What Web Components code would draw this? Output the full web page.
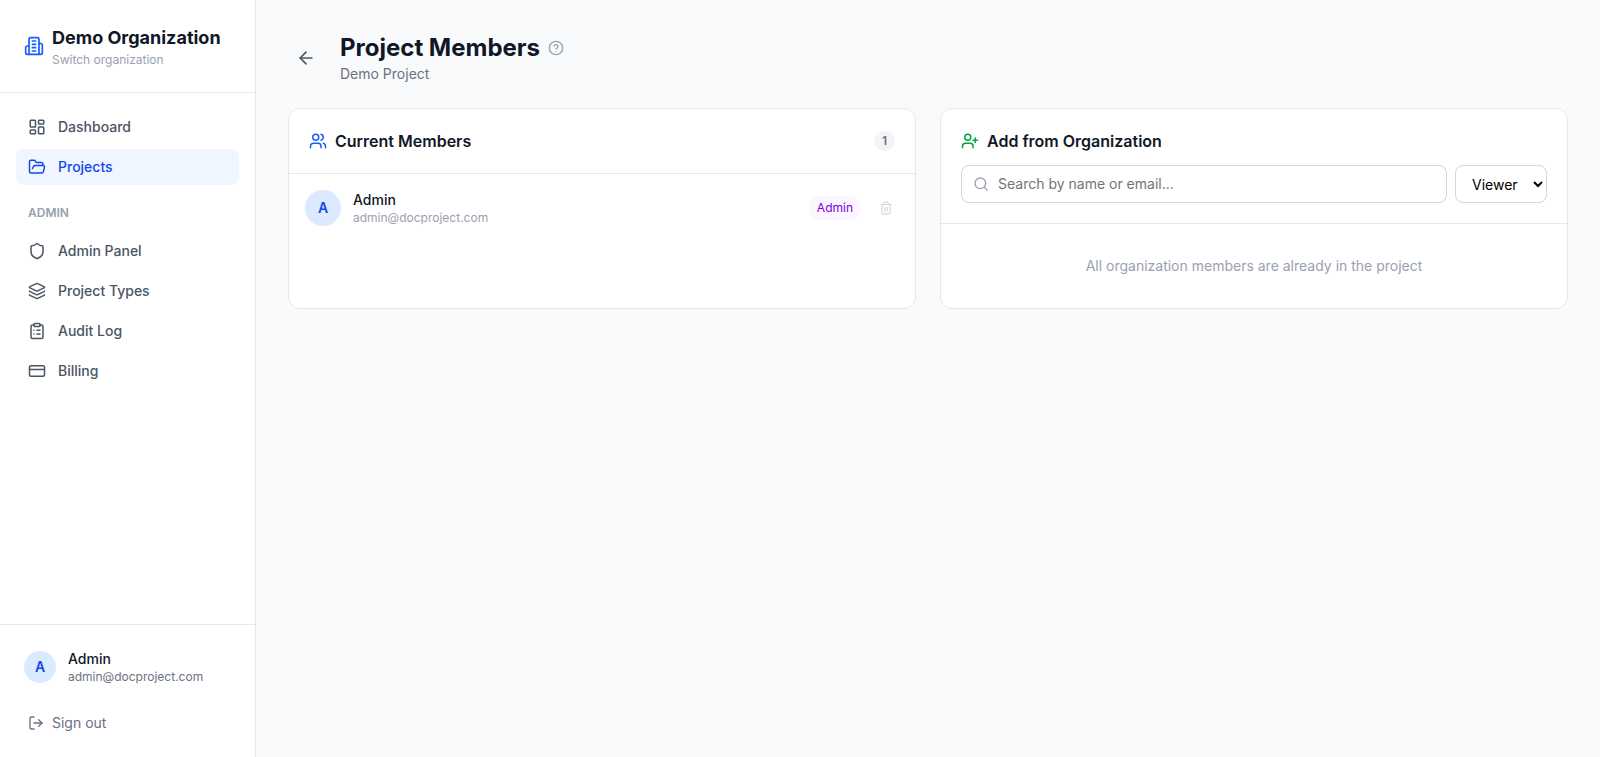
<!DOCTYPE html>
<html lang="en">
<head>
  <meta charset="UTF-8">
  <meta name="viewport" content="width=device-width, initial-scale=1">
  <title>Project Members</title>
  <style>
    :root {
      --gray-50: #f9fafb;
      --gray-100: #f3f4f6;
      --gray-200: #e5e7eb;
      --gray-300: #d1d5dc;
      --gray-400: #99a1af;
      --gray-500: #6a7282;
      --gray-600: #4a5565;
      --gray-900: #101828;
      --blue-50: #eff6ff;
      --blue-100: #dbeafe;
      --blue-600: #155dfc;
      --blue-700: #1447e6;
      --green-600: #00a63e;
      --purple-50: #faf5ff;
      --purple-700: #8200db;
    }
    body {
      margin: 0;
      background: var(--gray-50);
      color: var(--gray-900);
      font: 400 14px/20px Inter, "Liberation Sans", sans-serif;
    }
  </style>
</head>
<body>
  <members-page></members-page>

  <script>
    // Icon shapes on a 24x24 grid
    const ICONS = {
      building: '<path d="M6 22V4a2 2 0 0 1 2-2h8a2 2 0 0 1 2 2v18Z"/><path d="M6 12H4a2 2 0 0 0-2 2v6a2 2 0 0 0 2 2h2"/><path d="M18 9h2a2 2 0 0 1 2 2v9a2 2 0 0 1-2 2h-2"/><path d="M10 6h4M10 10h4M10 14h4M10 18h4"/>',
      dashboard: '<rect width="7" height="9" x="3" y="3" rx="1"/><rect width="7" height="5" x="14" y="3" rx="1"/><rect width="7" height="9" x="14" y="12" rx="1"/><rect width="7" height="5" x="3" y="16" rx="1"/>',
      folder: '<path d="m6 14 1.5-2.9A2 2 0 0 1 9.24 10H20a2 2 0 0 1 1.94 2.5l-1.54 6a2 2 0 0 1-1.95 1.5H4a2 2 0 0 1-2-2V5a2 2 0 0 1 2-2h3.9a2 2 0 0 1 1.69.9l.81 1.2a2 2 0 0 0 1.67.9H18a2 2 0 0 1 2 2v2"/>',
      shield: '<path d="M20 13c0 5-3.5 7.5-7.66 8.95a1 1 0 0 1-.67-.01C7.5 20.5 4 18 4 13V6a1 1 0 0 1 1-1c2 0 4.5-1.2 6.24-2.72a1.17 1.17 0 0 1 1.52 0C14.51 3.81 17 5 19 5a1 1 0 0 1 1 1z"/>',
      layers: '<path d="M12.83 2.18a2 2 0 0 0-1.66 0L2.6 6.08a1 1 0 0 0 0 1.83l8.58 3.91a2 2 0 0 0 1.66 0l8.58-3.9a1 1 0 0 0 0-1.83z"/><path d="M2 12a1 1 0 0 0 .58.91l8.6 3.91a2 2 0 0 0 1.65 0l8.58-3.9A1 1 0 0 0 22 12"/><path d="M2 17a1 1 0 0 0 .58.91l8.6 3.91a2 2 0 0 0 1.65 0l8.58-3.9A1 1 0 0 0 22 17"/>',
      clipboard: '<rect width="8" height="4" x="8" y="2" rx="1"/><path d="M16 4h2a2 2 0 0 1 2 2v14a2 2 0 0 1-2 2H6a2 2 0 0 1-2-2V6a2 2 0 0 1 2-2h2"/><path d="M12 11h4M12 16h4M8 11h.01M8 16h.01"/>',
      card: '<rect width="20" height="14" x="2" y="5" rx="2"/><path d="M2 10h20"/>',
      logout: '<path d="m16 17 5-5-5-5"/><path d="M21 12H9"/><path d="M9 21H5a2 2 0 0 1-2-2V5a2 2 0 0 1 2-2h4"/>',
      back: '<path d="m12 19-7-7 7-7"/><path d="M19 12H5"/>',
      help: '<circle cx="12" cy="12" r="10"/><path d="M9.09 9a3 3 0 0 1 5.83 1c0 2-3 3-3 3"/><path d="M12 17h.01"/>',
      users: '<path d="M16 21v-2a4 4 0 0 0-4-4H6a4 4 0 0 0-4 4v2"/><circle cx="9" cy="7" r="4"/><path d="M16 3.13a4 4 0 0 1 0 7.75"/><path d="M22 21v-2a4 4 0 0 0-3-3.87"/>',
      userPlus: '<path d="M16 21v-2a4 4 0 0 0-4-4H6a4 4 0 0 0-4 4v2"/><circle cx="9" cy="7" r="4"/><path d="M19 8v6M22 11h-6"/>',
      search: '<circle cx="11" cy="11" r="8"/><path d="m21 21-4.34-4.34"/>',
      trash: '<path d="M3 6h18"/><path d="M19 6v14a2 2 0 0 1-2 2H7a2 2 0 0 1-2-2V6"/><path d="M8 6V4a2 2 0 0 1 2-2h4a2 2 0 0 1 2 2v2"/><path d="M10 11v6M14 11v6"/>'
    };

    // Shared rules, repeated in every shadow root
    const RESET = `
      *, :host { box-sizing: border-box; }
      h1, h2, p { margin: 0; }
      a { color: inherit; text-decoration: none; }
      button, input, select { margin: 0; font: inherit; color: inherit; }
      button { padding: 0; border: 0; background: none; cursor: pointer; text-align: left; }
    `;

    class BaseElement extends HTMLElement {
      connectedCallback() {
        if (this.shadowRoot) return;
        this.attachShadow({ mode: 'open' });
        this.shadowRoot.innerHTML = `<style>${RESET}${this.styles()}</style>${this.render()}`;
      }
      styles() { return ''; }
      render() { return ''; }
    }

    class UiIcon extends BaseElement {
      styles() {
        return `
          :host { display: block; flex: none; }
          svg { display: block; }
        `;
      }
      render() {
        const size = this.getAttribute('size') || 18;
        return `<svg width="${size}" height="${size}" viewBox="0 0 24 24" fill="none" stroke="currentColor"
          stroke-width="2" stroke-linecap="round" stroke-linejoin="round" aria-hidden="true">${ICONS[this.getAttribute('name')]}</svg>`;
      }
    }

    class UserInfo extends BaseElement {
      styles() {
        return `
          :host { display: flex; align-items: center; gap: 12px; min-width: 0; --size: 32px; --email: var(--gray-500); }
          :host([large]) { --size: 36px; --email: var(--gray-400); }
          .avatar {
            display: flex; align-items: center; justify-content: center; flex: none;
            width: var(--size); height: var(--size); border-radius: 50%;
            background: var(--blue-100); color: var(--blue-700); font-weight: 600;
          }
          .name { font-weight: 500; }
          .email { color: var(--email); font-size: 12px; line-height: 16px; }
        `;
      }
      render() {
        const name = this.getAttribute('name');
        return `
          <div class="avatar">${name[0]}</div>
          <div>
            <p class="name">${name}</p>
            <p class="email">${this.getAttribute('email')}</p>
          </div>
        `;
      }
    }

    class NavItem extends BaseElement {
      styles() {
        return `
          :host { display: block; color: var(--gray-600); }
          :host([active]) { color: var(--blue-700); }
          a { display: flex; align-items: center; gap: 12px; padding: 8px 12px; border-radius: 8px; font-weight: 500; }
          a:hover { background: var(--gray-100); }
          :host([active]) a { background: var(--blue-50); }
        `;
      }
      render() {
        return `<a href="#"><ui-icon name="${this.getAttribute('icon')}"></ui-icon><slot></slot></a>`;
      }
    }

    class AppSidebar extends BaseElement {
      styles() {
        return `
          :host { display: flex; flex-direction: column; flex: none; width: 256px; background: #fff; border-right: 1px solid var(--gray-200); }
          .org { display: flex; align-items: center; gap: 8px; padding: 24px; border-bottom: 1px solid var(--gray-200); }
          .org ui-icon { color: var(--blue-600); }
          .org strong { display: block; font-size: 18px; line-height: 28px; font-weight: 700; white-space: nowrap; }
          .org span { display: block; font-size: 12px; line-height: 16px; color: var(--gray-400); }
          nav { flex: 1; display: flex; flex-direction: column; gap: 4px; padding: 16px; }
          .label { padding: 16px 12px 8px; font-size: 12px; line-height: 16px; font-weight: 600; color: var(--gray-400); text-transform: uppercase; }
          .account { padding: 16px; border-top: 1px solid var(--gray-200); }
          user-info { padding: 8px; margin-bottom: 12px; }
          .signout { display: flex; align-items: center; gap: 8px; width: 100%; padding: 8px 12px; color: var(--gray-500); }
        `;
      }
      render() {
        return `
          <button class="org" type="button">
            <ui-icon name="building" size="20"></ui-icon>
            <div><strong>Demo Organization</strong><span>Switch organization</span></div>
          </button>
          <nav>
            <nav-item icon="dashboard">Dashboard</nav-item>
            <nav-item icon="folder" active>Projects</nav-item>
            <p class="label">Admin</p>
            <nav-item icon="shield">Admin Panel</nav-item>
            <nav-item icon="layers">Project Types</nav-item>
            <nav-item icon="clipboard">Audit Log</nav-item>
            <nav-item icon="card">Billing</nav-item>
          </nav>
          <div class="account">
            <user-info name="Admin" email="admin@docproject.com"></user-info>
            <button class="signout" type="button"><ui-icon name="logout" size="16"></ui-icon>Sign out</button>
          </div>
        `;
      }
    }

    class PageHeader extends BaseElement {
      styles() {
        return `
          :host { display: flex; align-items: center; gap: 16px; margin-bottom: 24px; }
          .back { padding: 8px; color: var(--gray-600); }
          .title { display: flex; align-items: center; gap: 8px; }
          h1 { font-size: 24px; line-height: 32px; font-weight: 700; }
          .help { color: var(--gray-400); }
          p { color: var(--gray-500); }
        `;
      }
      render() {
        return `
          <a class="back" href="#" aria-label="Back"><ui-icon name="back" size="20"></ui-icon></a>
          <div>
            <div class="title">
              <h1>${this.getAttribute('heading')}</h1>
              <button class="help" type="button" aria-label="Help"><ui-icon name="help" size="16"></ui-icon></button>
            </div>
            <p><slot></slot></p>
          </div>
        `;
      }
    }

    class PanelCard extends BaseElement {
      styles() {
        return `
          :host { display: block; background: #fff; border: 1px solid var(--gray-200); border-radius: 12px; }
          header { padding: 20px; border-bottom: 1px solid var(--gray-200); }
          .row { display: flex; align-items: center; gap: 8px; }
          h2 { flex: 1; font-size: 16px; line-height: 24px; font-weight: 600; }
          .row ui-icon { color: var(--accent, var(--blue-600)); }
        `;
      }
      render() {
        return `
          <header>
            <div class="row">
              <ui-icon name="${this.getAttribute('icon')}"></ui-icon>
              <h2>${this.getAttribute('heading')}</h2>
              <slot name="count"></slot>
            </div>
            <slot name="tools"></slot>
          </header>
          <slot></slot>
        `;
      }
    }

    class MemberRow extends BaseElement {
      styles() {
        return `
          :host { display: flex; align-items: center; gap: 12px; padding: 16px; }
          user-info { flex: 1; }
          .role { padding: 4px 8px; border-radius: 12px; background: var(--purple-50); color: var(--purple-700); font-size: 12px; line-height: 16px; }
          .remove { padding: 6px; color: var(--gray-300); }
        `;
      }
      render() {
        return `
          <user-info large name="${this.getAttribute('name')}" email="${this.getAttribute('email')}"></user-info>
          <span class="role">${this.getAttribute('role-name')}</span>
          <button class="remove" type="button" aria-label="Remove member"><ui-icon name="trash" size="14"></ui-icon></button>
        `;
      }
    }

    class MemberSearch extends BaseElement {
      styles() {
        return `
          :host { display: flex; gap: 8px; margin-top: 12px; }
          .field { position: relative; flex: 1; display: flex; align-items: center; }
          .field ui-icon { position: absolute; left: 12px; color: var(--gray-400); }
          input { width: 100%; padding: 8px 12px 8px 36px; line-height: 20px; }
          select { padding: 8px 12px; color: #000; }
          input, select { border: 1px solid var(--gray-300); border-radius: 8px; background: #fff; }
        `;
      }
      render() {
        return `
          <div class="field">
            <ui-icon name="search" size="16"></ui-icon>
            <input type="text" placeholder="Search by name or email..." aria-label="Search by name or email">
          </div>
          <select aria-label="Role">
            <option>Viewer</option>
            <option>Editor</option>
            <option>Admin</option>
          </select>
        `;
      }
    }

    class MembersPage extends BaseElement {
      styles() {
        return `
          :host { display: flex; min-height: 100vh; }
          main { flex: 1; min-width: 0; padding: 32px; }
          .grid { display: grid; grid-template-columns: repeat(2, minmax(0, 1fr)); gap: 24px; }
          .count { padding: 2px 8px; border-radius: 10px; background: var(--gray-100); color: var(--gray-500); font-size: 12px; line-height: 16px; font-weight: 600; }
          .add { --accent: var(--green-600); }
          .empty { padding: 32px; text-align: center; color: var(--gray-400); }
        `;
      }
      render() {
        return `
          <app-sidebar></app-sidebar>
          <main>
            <page-header heading="Project Members">Demo Project</page-header>
            <div class="grid">
              <panel-card icon="users" heading="Current Members">
                <span class="count" slot="count">1</span>
                <member-row name="Admin" email="admin@docproject.com" role-name="Admin"></member-row>
              </panel-card>
              <panel-card class="add" icon="userPlus" heading="Add from Organization">
                <member-search slot="tools"></member-search>
                <p class="empty">All organization members are already in the project</p>
              </panel-card>
            </div>
          </main>
        `;
      }
    }

    customElements.define('ui-icon', UiIcon);
    customElements.define('user-info', UserInfo);
    customElements.define('nav-item', NavItem);
    customElements.define('app-sidebar', AppSidebar);
    customElements.define('page-header', PageHeader);
    customElements.define('panel-card', PanelCard);
    customElements.define('member-row', MemberRow);
    customElements.define('member-search', MemberSearch);
    customElements.define('members-page', MembersPage);
  </script>
</body>
</html>
